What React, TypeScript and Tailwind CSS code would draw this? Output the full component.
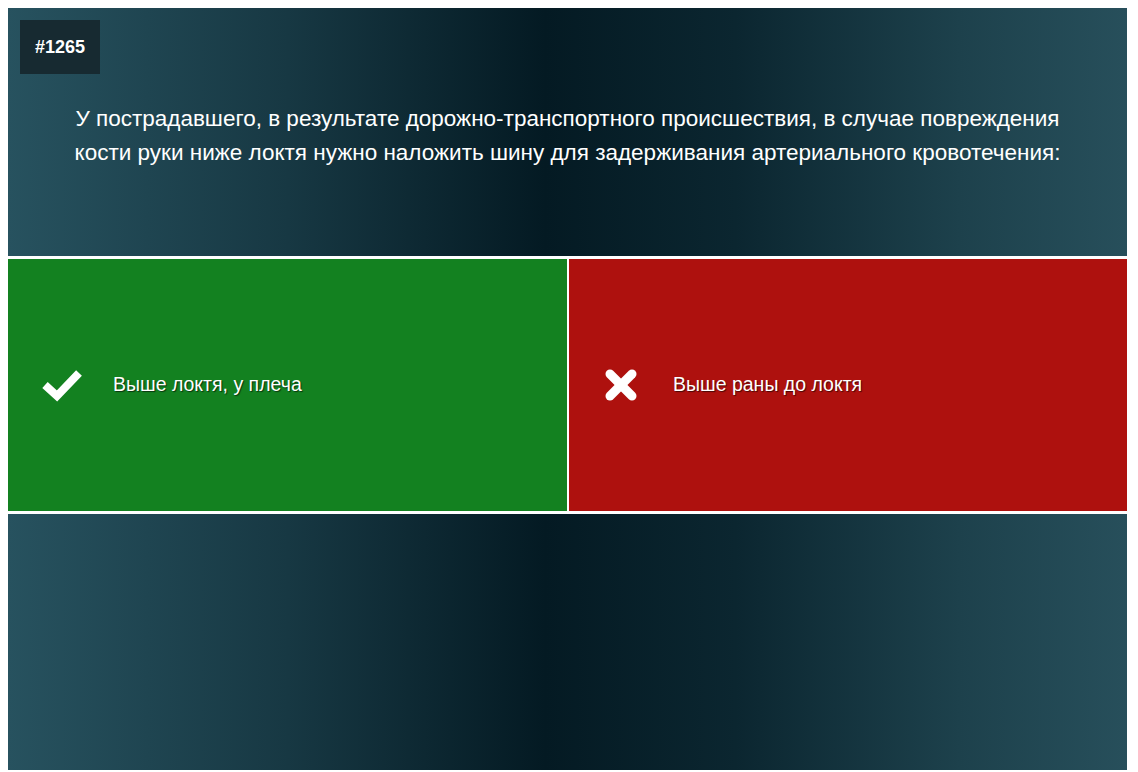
import React from 'react';

const panelBg =
    'bg-[linear-gradient(90deg,#27525f_0%,#173843_25%,#041a23_48%,#0b2630_65%,#1d414c_85%,#274f5b_100%)]';

const CheckIcon = () => (
    <svg width="40" height="34" viewBox="0 0 40 34" className="shrink-0">
        <polyline points="3,17 15,28 37,5" fill="none" stroke="#fff" strokeWidth="8" strokeLinejoin="miter" />
    </svg>
);

const CrossIcon = () => (
    <svg width="32" height="32" viewBox="0 0 32 32" className="shrink-0">
        <g stroke="#fff" strokeWidth="9" strokeLinecap="round">
            <line x1="5" y1="5" x2="27" y2="27" />
            <line x1="27" y1="5" x2="5" y2="27" />
        </g>
    </svg>
);

interface AnswerProps {
    text: string;
    correct: boolean;
}

const Answer: React.FC<AnswerProps> = ({ text, correct }) => (
    <div
        className={`flex items-center ${correct ? 'w-[559px] bg-[#138120] pl-[34px]' : 'flex-1 bg-[#ae110e] pl-[36px]'}`}
    >
        <div className={correct ? 'w-[71px]' : 'w-[68px]'}>{correct ? <CheckIcon /> : <CrossIcon />}</div>
        <span className="text-white text-[19.5px] [text-shadow:1px_1px_1px_rgba(0,0,0,0.6)]">{text}</span>
    </div>
);

export default function App() {
    return (
        <div className="bg-white pt-2 px-2 pb-[2px] w-[1138px] h-[772px] font-['Liberation_Sans',Arial,sans-serif]">
            <div className="flex flex-col gap-[3px] w-[1119px]">
                <div className={`${panelBg} h-[248px] pt-3 px-3`}>
                    <div className="inline-flex items-center justify-center w-[80px] h-[54px] bg-[#172a31] text-white font-bold text-[18px]">
                        #1265
                    </div>
                    <p className="mt-[28px] px-[48px] text-center text-white text-[22.5px] leading-[34px]">
                        У пострадавшего, в результате дорожно-транспортного происшествия, в случае повреждения кости руки ниже локтя нужно наложить шину для задерживания артериального кровотечения:
                    </p>
                </div>
                <div className="flex gap-[2px] h-[252px]">
                    <Answer text="Выше локтя, у плеча" correct />
                    <Answer text="Выше раны до локтя" correct={false} />
                </div>
                <div className={`${panelBg} h-[256px]`} />
            </div>
        </div>
    );
}
